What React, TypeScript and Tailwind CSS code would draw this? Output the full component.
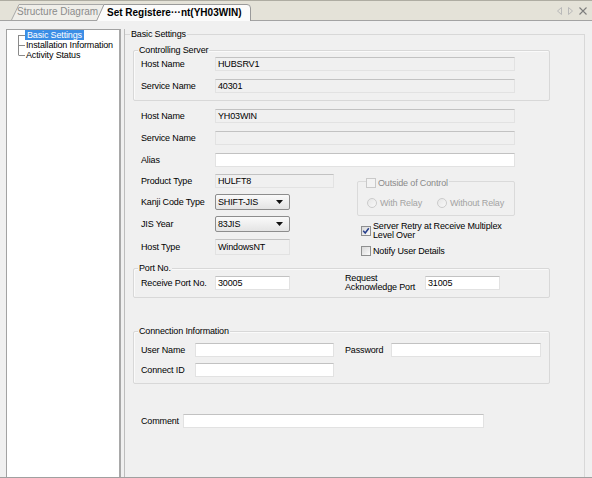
import React from "react";

const F = "[font-family:'Liberation_Sans',Arial,sans-serif]";

function Box({ w, h = 14, white, children }: { w: string; h?: number; white?: boolean; children?: React.ReactNode }) {
  return (
    <div
      className={`flex items-center ${w} ${h === 16 ? "h-[16px]" : "h-[14px]"} pl-[2px] border border-[#e2e2e2] border-t-[#c2c2c2] ${
        white ? "bg-white" : "bg-[#f0f0f0]"
      } text-black`}
    >
      {children}
    </div>
  );
}

function Select({ value }: { value: string }) {
  return (
    <div className="flex items-center justify-between h-[16px] w-[75px] border border-[#8d8d8d] rounded-[2px] bg-linear-to-b from-[#fafafa] to-[#e4e4e4] pl-[2px] pr-[6px] text-black">
      <span>{value}</span>
      <svg width="7" height="4" viewBox="0 0 7 4">
        <path d="M0 0H7L3.5 4Z" fill="#111" />
      </svg>
    </div>
  );
}

function Group({ label, className, children }: { label: React.ReactNode; className: string; children?: React.ReactNode }) {
  return (
    <div className={`relative border border-[#d8d8d8] rounded-[2px] shadow-[inset_1px_1px_0_#fafafa] ${className}`}>
      <span className="absolute left-[4px] top-[-6px] leading-[10px] bg-[#f0f0f0] px-[1px] text-black">{label}</span>
      {children}
    </div>
  );
}

function Check({ checked, disabled }: { checked?: boolean; disabled?: boolean }) {
  return (
    <span
      className={`flex shrink-0 items-center justify-center w-[10px] h-[10px] border ${
        disabled ? "border-[#c9c9c9] bg-[#f3f3f3]" : "border-[#8e8f8f] bg-linear-to-br from-[#d8d8d8] to-[#fbfbfb]"
      }`}
    >
      {checked && (
        <svg width="8" height="8" viewBox="0 0 8 8">
          <path d="M1.2 3.8L3.2 6L6.8 1.2" stroke="#263f8c" strokeWidth="1.5" fill="none" />
        </svg>
      )}
    </span>
  );
}

function Radio() {
  return <span className="block shrink-0 w-[10px] h-[10px] rounded-full border border-[#cbcbcb] bg-linear-to-br from-[#e6e6e6] to-[#f8f8f8]" />;
}

function TreeLine({ kind }: { kind: "first" | "mid" | "last" }) {
  const y1 = kind === "first" ? 5 : 0;
  const y2 = kind === "last" ? 5 : 10;
  return (
    <svg width="18" height="10" viewBox="0 0 18 10" className="shrink-0">
      <path d={`M11.5 ${y1}V${y2}M11.5 5.5H18`} stroke="#8a8a8a" strokeWidth="1" fill="none" />
    </svg>
  );
}

export default function App() {
  return (
    <div className={`${F} w-[592px] h-[478px] flex flex-col bg-[#f0f0f0] text-[9px] leading-[10px] text-black overflow-hidden`}>
      {/* tab bar */}
      <div className="flex items-end h-[21px] shrink-0 bg-[#e4e2d8] border-t border-[#aeaca2] border-b border-b-[#a3a3a3] pl-[11px]">
        <div className="relative flex items-center w-[93px] h-[16px] pl-[6px] text-[10px] text-[#8b8b8b]">
          <svg className="absolute inset-0" width="93" height="16" viewBox="0 0 93 16">
            <path d="M0.5 16L8 0.5H92.5V16" fill="#efeee9" stroke="#a8a8a8" />
          </svg>
          <span className="relative whitespace-nowrap">Structure Diagram</span>
        </div>
        <div className="relative z-10 flex items-center w-[155px] h-[17px] ml-[-8px] mb-[-1px] pl-[11px] text-[10px] font-bold text-black">
          <svg className="absolute inset-0" width="155" height="17" viewBox="0 0 155 17">
            <path d="M0.5 17L8 0.5H151Q154.5 0.5 154.5 4V17" fill="#fbfbfb" stroke="#9a9a9a" />
          </svg>
          <span className="relative whitespace-nowrap">Set Registere···nt(YH03WIN)</span>
        </div>
        <div className="ml-auto mr-[5px] self-center flex items-center gap-[6px]">
          <svg width="5" height="8" viewBox="0 0 5 8">
            <path d="M4.5 0.5V7.5L0.5 4Z" fill="none" stroke="#b9b9b9" />
          </svg>
          <svg width="5" height="8" viewBox="0 0 5 8">
            <path d="M0.5 0.5V7.5L4.5 4Z" fill="none" stroke="#b9b9b9" />
          </svg>
          <svg width="8" height="8" viewBox="0 0 8 8">
            <path d="M0.5 0.5L7.5 7.5M7.5 0.5L0.5 7.5" stroke="#7d7d7d" strokeWidth="1.1" />
          </svg>
        </div>
      </div>

      {/* body */}
      <div className="flex flex-1 pt-[8px] pl-[6px] border-b border-[#a0a0a0] tracking-[-0.15px]">
        {/* tree */}
        <div className="w-[115px] bg-white border border-b-0 border-[#a2a2a2] border-r-2 border-r-[#a8a8a8]">
          <div className="flex items-center h-[10px]">
            <TreeLine kind="first" />
            <span className="bg-[#3b8ee6] text-white px-[2px] h-[10px] leading-[10px] whitespace-nowrap">Basic Settings</span>
          </div>
          <div className="flex items-center h-[10px]">
            <TreeLine kind="mid" />
            <span className="px-[1px] whitespace-nowrap">Installation Information</span>
          </div>
          <div className="flex items-center h-[10px]">
            <TreeLine kind="last" />
            <span className="px-[1px] whitespace-nowrap">Activity Status</span>
          </div>
        </div>

        {/* right pane */}
        <div className="ml-[3px] flex-1 border-l border-[#bdbdbd]">
          <div className="relative mt-[5px] w-[460px] h-[443px] border-t border-r border-[#d8d8d8] flex flex-col">
            <span className="absolute left-[5px] top-[-6px] leading-[10px] bg-[#f0f0f0] px-[1px]">Basic Settings</span>

            {/* Controlling Server */}
            <Group label="Controlling Server" className="ml-[8px] mt-[15px] w-[417px] pt-[6px] pb-[7px] pl-[7px] flex flex-col gap-[8px]">
              <div className="flex items-center h-[14px]">
                <span className="w-[74px]">Host Name</span>
                <Box w="w-[300px]">HUBSRV1</Box>
              </div>
              <div className="flex items-center h-[14px]">
                <span className="w-[74px]">Service Name</span>
                <Box w="w-[300px]">40301</Box>
              </div>
            </Group>

            <div className="flex items-center h-[14px] mt-[8px] pl-[16px]">
              <span className="w-[74px]">Host Name</span>
              <Box w="w-[300px]">YH03WIN</Box>
            </div>
            <div className="flex items-center h-[14px] mt-[8px] pl-[16px]">
              <span className="w-[74px]">Service Name</span>
              <Box w="w-[300px]" />
            </div>
            <div className="flex items-center h-[14px] mt-[8px] pl-[16px]">
              <span className="w-[74px]">Alias</span>
              <Box w="w-[300px]" white />
            </div>

            {/* section 2 */}
            <div className="flex mt-[7px]">
              <div className="w-[209px] pl-[16px] flex flex-col">
                <div className="flex items-center h-[14px]">
                  <span className="w-[74px]">Product Type</span>
                  <Box w="w-[119px]">HULFT8</Box>
                </div>
                <div className="flex items-center h-[16px] mt-[6px]">
                  <span className="w-[74px]">Kanji Code Type</span>
                  <Select value="SHIFT-JIS" />
                </div>
                <div className="flex items-center h-[16px] mt-[6px]">
                  <span className="w-[74px]">JIS Year</span>
                  <Select value="83JIS" />
                </div>
                <div className="flex items-center h-[16px] mt-[7px]">
                  <span className="w-[74px]">Host Type</span>
                  <Box w="w-[75px]" h={16}>WindowsNT</Box>
                </div>
              </div>

              <div className="ml-[23px] w-[158px] flex flex-col">
                <div className="relative mt-[7px] h-[35px] border border-[#dadada] rounded-[2px] pt-[16px] pl-[9px] flex items-start text-[#a3a3a3]">
                  <div className="absolute left-[8px] top-[-4px] flex items-center gap-[2px] bg-[#f0f0f0] pr-[1px] text-[#8a8a8a]">
                    <Check disabled />
                    <span className="leading-[10px]">Outside of Control</span>
                  </div>
                  <div className="flex items-center gap-[3px] w-[70px]">
                    <Radio />
                    <span>With Relay</span>
                  </div>
                  <div className="flex items-center gap-[3px]">
                    <Radio />
                    <span>Without Relay</span>
                  </div>
                </div>
                <div className="flex items-center gap-[2px] mt-[6px] ml-[4px]">
                  <Check checked />
                  <span className="leading-[9px]">
                    Server Retry at Receive Multiplex
                    <br />
                    Level Over
                  </span>
                </div>
                <div className="flex items-center gap-[2px] mt-[6px] ml-[4px] h-[10px]">
                  <Check />
                  <span>Notify User Details</span>
                </div>
              </div>
            </div>

            {/* Port No. */}
            <Group label="Port No." className="ml-[8px] mt-[12px] w-[417px] h-[30px] pl-[7px] flex items-center">
              <span className="w-[74px]">Receive Port No.</span>
              <Box w="w-[75px]" white>30005</Box>
              <span className="ml-[55px] w-[80px] leading-[9px]">
                Request
                <br />
                Acknowledge Port
              </span>
              <Box w="w-[75px]" white>31005</Box>
            </Group>

            {/* Connection Information */}
            <Group label="Connection Information" className="ml-[8px] mt-[33px] w-[417px] pt-[11px] pb-[6px] pl-[7px] flex flex-col gap-[6px]">
              <div className="flex items-center h-[14px]">
                <span className="w-[54px]">User Name</span>
                <Box w="w-[139px]" white />
                <span className="ml-[11px] w-[46px]">Password</span>
                <Box w="w-[150px]" white />
              </div>
              <div className="flex items-center h-[14px]">
                <span className="w-[54px]">Connect ID</span>
                <Box w="w-[139px]" white />
              </div>
            </Group>

            <div className="flex items-center h-[14px] mt-[30px] pl-[16px]">
              <span className="w-[42px]">Comment</span>
              <Box w="w-[301px]" white />
            </div>
          </div>
        </div>
      </div>
    </div>
  );
}
